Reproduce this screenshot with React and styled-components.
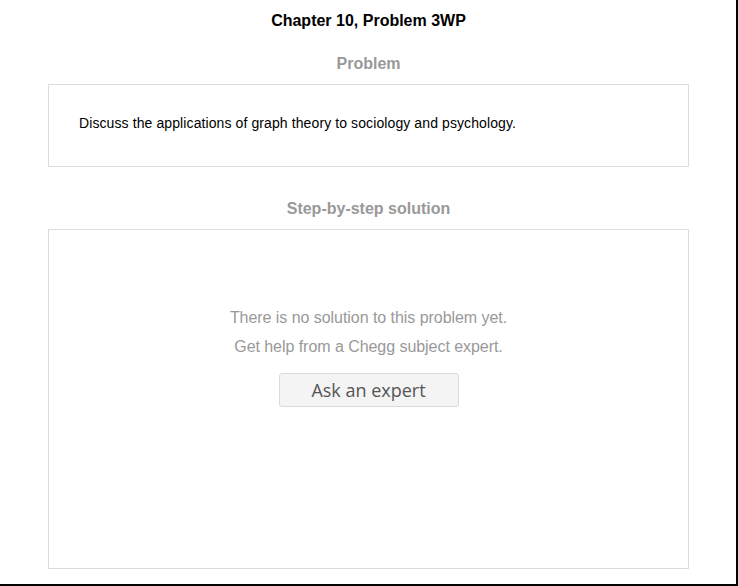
import React from "react";
import styled, { createGlobalStyle } from "styled-components";

const Global = createGlobalStyle`
  html, body { margin: 0; padding: 0; background: #fff; }
  body { font-family: "Liberation Sans", Arial, sans-serif; }
`;

const Frame = styled.div`
  width: 641px;
  height: 584px;
  padding: 0 47px 0 48px;
  border-right: 2px solid #000;
  border-bottom: 2px solid #000;
  background: #fff;
  box-sizing: content-box;
  display: flex;
  flex-direction: column;
  overflow: hidden;
`;

const Title = styled.h1`
  margin: 12px 0 0;
  font-size: 16px;
  line-height: 18px;
  font-weight: bold;
  color: #000;
  text-align: center;
`;

const SectionHeading = styled.h2`
  margin: ${(p) => p.$top}px 0 11px;
  font-size: 16px;
  line-height: 18px;
  font-weight: bold;
  color: #999;
  text-align: center;
`;

const Card = styled.div`
  border: 1px solid #dcdcdc;
  box-sizing: border-box;
`;

const ProblemCard = styled(Card)`
  height: 83px;
  padding: 30px 30px 0 30px;
`;

const ProblemText = styled.p`
  margin: 0;
  font-size: 14px;
  line-height: 16px;
  letter-spacing: 0.1px;
  color: #000;
`;

const SolutionCard = styled(Card)`
  height: 340px;
  padding-top: 73px;
  display: flex;
  flex-direction: column;
  align-items: center;
`;

const Message = styled.p`
  margin: 0;
  font-size: 16px;
  line-height: 29px;
  letter-spacing: -0.05px;
  color: #999;
  text-align: center;
`;

const AskButton = styled.button`
  margin-top: 12px;
  width: 180px;
  height: 34px;
  background: #f4f4f4;
  border: 1px solid #dadada;
  border-radius: 3px;
  font-family: "Open Sans", "Noto Sans", sans-serif;
  font-size: 18px;
  color: #555;
  padding: 0;
  cursor: pointer;
`;

export default function App() {
  return (
    <>
      <Global />
      <Frame>
        <Title>Chapter 10, Problem 3WP</Title>
        <SectionHeading $top={25}>Problem</SectionHeading>
        <ProblemCard>
          <ProblemText>
            Discuss the applications of graph theory to sociology and psychology.
          </ProblemText>
        </ProblemCard>
        <SectionHeading $top={33}>Step-by-step solution</SectionHeading>
        <SolutionCard>
          <Message>There is no solution to this problem yet.</Message>
          <Message>Get help from a Chegg subject expert.</Message>
          <AskButton>Ask an expert</AskButton>
        </SolutionCard>
      </Frame>
    </>
  );
}
